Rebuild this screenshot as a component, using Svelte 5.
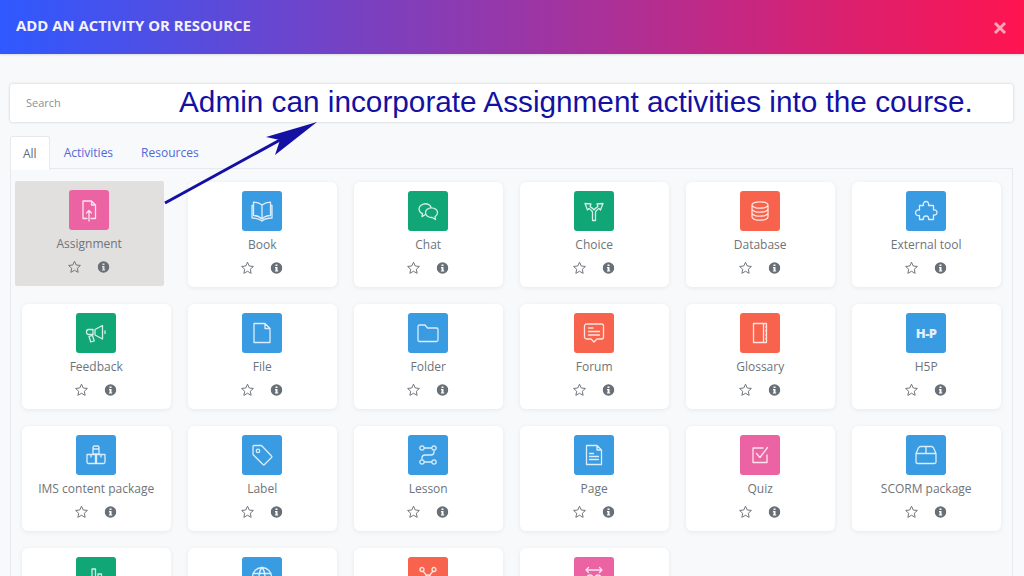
<script>
  const colors = { pink: '#ec63a4', blue: '#399be2', green: '#11a676', orange: '#f7634d' }

  const icons = {
    assign: 'M10 20.5H6V3H14.5L18.5 7V20.5H14M14.5 3V7H18.5M12 23V12.5M9.5 15L12 12.5L14.5 15',
    book: 'M12 6C9.5 4 6.5 3.2 3.5 3.2V16.5C6.5 16.5 9.5 17.5 12 20C14.5 17.5 17.5 16.5 20.5 16.5V3.2C17.5 3.2 14.5 4 12 6ZM12 6V20M3.5 6.5H2V19C6 19 9.5 19.8 12 22C14.5 19.8 18 19 22 19V6.5H20.5',
    chat: 'M6.5 14.8C3.5 13.4 2.2 10.6 3.6 7.8C5 5.1 9.2 3.9 12.4 5.4C13.8 6.1 14.8 7.2 15.2 8.6M6.5 14.5L6 17.6L9 15.8M15.5 8.8C19 8.8 21.5 11 21.5 13.7C21.5 15.5 20.5 16.8 19 17.6L19.5 20.5L16.2 18.5C12.5 18.7 9.5 16.5 9.5 13.7C9.5 11 12 8.8 15.5 8.8Z',
    choice: 'M10.5 21.5H13.5V13.5C13.5 12 15 11 17 9.5L18.5 11L21 4.5L15 5L16 7.5C14 9 12.5 10 12 11C11.5 10 10 9 8 7.5L9 5L3 4.5L5.5 11L7 9.5C9 11 10.5 12 10.5 13.5Z',
    database: 'M4 6C4 4.2 7.6 2.8 12 2.8S20 4.2 20 6V18C20 19.8 16.4 21.2 12 21.2S4 19.8 4 18ZM4 6C4 7.8 7.6 9.2 12 9.2S20 7.8 20 6M4 10C4 11.8 7.6 13.2 12 13.2S20 11.8 20 10M4 14C4 15.8 7.6 17.2 12 17.2S20 15.8 20 14',
    puzzle: 'M9.5 6.5C8.8 4 10.2 2.5 12 2.5S15.2 4 14.5 6.5H19.5V11C21.8 10.4 23 11.8 23 13.5S21.8 16.6 19.5 16V20.5H14.5C15.2 18.5 14 17 12 17S8.8 18.5 9.5 20.5H5.5V16.5C3 17 1.5 15.5 1.5 13.7S3 10.4 5.5 11V6.5Z',
    feedback: 'M11 8.5L18.5 4.5V18L11 14ZM21 10V12.5M4.5 8.5H9V13.5H4.5C3.2 13.5 2.5 12.5 2.5 11S3.2 8.5 4.5 8.5ZM5 15.5L8.5 14.5L10.2 20L6.8 21Z',
    file: 'M4 2.5H15L20 7.5V21.5H4ZM15 2.5V7.5H20',
    folder: 'M2 5.5C2 4.5 2.5 4 3.5 4H9L11.5 7H20.5C21.5 7 22 7.5 22 8.5V19C22 20 21.5 20.5 20.5 20.5H3.5C2.5 20.5 2 20 2 19Z',
    forum: 'M4.5 3H19.5A2 2 0 0 1 21.5 5V16A2 2 0 0 1 19.5 18H15L12 21L9 18H4.5A2 2 0 0 1 2.5 16V5A2 2 0 0 1 4.5 3ZM6.5 7H11M6.5 10.5H17.5M6.5 14H17.5',
    glossary: 'M5.5 2.5H18.5V21.5H5.5ZM15.5 2.5V21.5M18 5V6.5M18 9V10.5M18 13V14.5M18 17V18.5',
    ims: 'M9 8V4.5C9 3.5 9.5 3 10.5 3H13.5C14.5 3 15 3.5 15 4.5V11H9V8ZM9 6H15M3 11.5H11.5V20.5H4.5C3.5 20.5 3 20 3 19ZM12.5 11.5H21V19C21 20 20.5 20.5 19.5 20.5H12.5ZM7 11.5V14M17 11.5V14',
    label: 'M3 3.5C3 3 3.3 2.5 4 2.5H11.5L21.5 13C22 13.5 22 14 21.5 14.5L14.5 21.5C14 22 13.5 22 13 21.5L3 11.5ZM8 6.2A1.7 1.7 0 1 0 8 9.6A1.7 1.7 0 1 0 8 6.2Z',
    lesson: 'M6 2.8A2.2 2.2 0 1 0 6 7.2A2.2 2.2 0 1 0 6 2.8ZM18 2.8A2.2 2.2 0 1 0 18 7.2A2.2 2.2 0 1 0 18 2.8ZM6 16.8A2.2 2.2 0 1 0 6 21.2A2.2 2.2 0 1 0 6 16.8ZM18 16.8A2.2 2.2 0 1 0 18 21.2A2.2 2.2 0 1 0 18 16.8ZM8.2 5H15.8M8.2 19H15.8M18 7.2V9C18 11 16.5 12 15 12H9C7.5 12 6 13 6 15V16.8',
    page: 'M4.5 2.5H15L19.5 7V21.5H4.5ZM15 2.5V7H19.5M7.5 10.5H11.5M7.5 13.5H16.5M7.5 16.5H16.5',
    quiz: 'M19 12V19.5H5V5H15M8.5 10.5L12 14.5L19.5 4.5',
    scorm: 'M6.5 3.5H17.5C18.5 3.5 19 4 19.5 4.8L22 10.5V19C22 20 21.5 20.5 20.5 20.5H3.5C2.5 20.5 2 20 2 19V10.5L4.5 4.8C5 4 5.5 3.5 6.5 3.5ZM2 10.5H22M12 3.5V10.5',
    survey: 'M8 19V4H11.5V19ZM14 19V9H17.5V19ZM4 21H20',
    url: 'M12 2.5A9.5 9.5 0 1 0 12 21.5A9.5 9.5 0 1 0 12 2.5ZM12 2.5C8 7 8 17 12 21.5M12 2.5C16 7 16 17 12 21.5M3.5 8.5H20.5M3.5 15.5H20.5',
    wiki: 'M12 10A2.5 2.5 0 1 0 12 15A2.5 2.5 0 1 0 12 10ZM6 2.5A2 2 0 1 0 6 6.5A2 2 0 1 0 6 2.5ZM18 2.5A2 2 0 1 0 18 6.5A2 2 0 1 0 18 2.5ZM7 6L10.5 10.5M17 6L13.5 10.5M12 15V20',
    workshop: 'M4 5H20M4 5L6.5 2.5M4 5L6.5 7.5M20 5L17.5 2.5M20 5L17.5 7.5M8 10A3 3 0 1 0 8 16A3 3 0 1 0 8 10ZM16 10A3 3 0 1 0 16 16A3 3 0 1 0 16 10Z'
  }

  // the last row runs off the bottom of the window, only its tiles show
  const items = [
    { name: 'Assignment', color: 'pink', icon: 'assign', active: true },
    { name: 'Book', color: 'blue', icon: 'book' },
    { name: 'Chat', color: 'green', icon: 'chat' },
    { name: 'Choice', color: 'green', icon: 'choice' },
    { name: 'Database', color: 'orange', icon: 'database' },
    { name: 'External tool', color: 'blue', icon: 'puzzle' },
    { name: 'Feedback', color: 'green', icon: 'feedback' },
    { name: 'File', color: 'blue', icon: 'file' },
    { name: 'Folder', color: 'blue', icon: 'folder' },
    { name: 'Forum', color: 'orange', icon: 'forum' },
    { name: 'Glossary', color: 'orange', icon: 'glossary' },
    { name: 'H5P', color: 'blue', text: 'H-P' },
    { name: 'IMS content package', color: 'blue', icon: 'ims' },
    { name: 'Label', color: 'blue', icon: 'label' },
    { name: 'Lesson', color: 'blue', icon: 'lesson' },
    { name: 'Page', color: 'blue', icon: 'page' },
    { name: 'Quiz', color: 'pink', icon: 'quiz' },
    { name: 'SCORM package', color: 'blue', icon: 'scorm' },
    { color: 'green', icon: 'survey' },
    { color: 'blue', icon: 'url' },
    { color: 'orange', icon: 'wiki' },
    { color: 'pink', icon: 'workshop' }
  ]
</script>

<div class="modal">
  <header class="head">
    <h1>ADD AN ACTIVITY OR RESOURCE</h1>
    <svg class="close" viewBox="0 0 14 14" aria-hidden="true"><path d="M2 2L12 12M12 2L2 12" /></svg>
  </header>

  <main class="body">
    <div class="search">Search</div>

    <nav class="tabs">
      <span class="tab on">All</span>
      <span class="tab">Activities</span>
      <span class="tab">Resources</span>
    </nav>

    <section class="pane">
      {#each items as item}
        <article class="card" class:active={item.active}>
          <div class="tile" style="background:{colors[item.color]}">
            {#if item.text}
              <span class="logo">{item.text}</span>
            {:else}
              <svg viewBox="0 0 24 24" aria-hidden="true"><path d={icons[item.icon]} /></svg>
            {/if}
          </div>
          {#if item.name}
            <div class="name">{item.name}</div>
            <div class="actions">
              <svg class="star" viewBox="0 0 14 14" aria-hidden="true"><path d="M7 1.2L8.75 5L12.9 5.45L9.8 8.25L10.65 12.35L7 10.25L3.35 12.35L4.2 8.25L1.1 5.45L5.25 5Z" /></svg>
              <svg class="info" viewBox="0 0 12 12" aria-hidden="true"><path fill-rule="evenodd" d="M6 .2A5.8 5.8 0 1 0 6 11.8A5.8 5.8 0 1 0 6 .2ZM5 2.4H7V4.1H5ZM4.5 5H7V8.4H7.7V9.6H4.4V8.4H5.1V6.2H4.5Z" /></svg>
            </div>
          {/if}
        </article>
      {/each}
    </section>
  </main>

  <!-- annotation drawn over the screenshot -->
  <div class="note">Admin can incorporate Assignment activities into the course.</div>
  <svg class="arrow" viewBox="0 0 1024 576" aria-hidden="true">
    <path d="M165 203L280 140" />
    <polygon points="317,122 266,137 280,140 275,155" />
  </svg>
</div>

<style>
  :global(body) {
    margin: 0;
    overflow: hidden;
  }
  .modal {
    position: relative;
    width: 1024px;
    height: 576px;
    overflow: hidden;
    background: #f7f9fb;
    font-family: "Open Sans", "Noto Sans", sans-serif;
  }
  .head {
    display: flex;
    justify-content: space-between;
    height: 54px;
    padding: 0 17px 0 16px;
    box-sizing: border-box;
    background: linear-gradient(90deg, #2f59ff 0%, #ff1450 100%);
    box-shadow: 0 1px 2px rgba(0, 0, 0, .12);
  }
  .head h1 {
    margin: 15px 0 0;
    font-size: 14.9px;
    line-height: 20px;
    font-weight: 700;
    color: #f4f2fc;
  }
  .close {
    width: 14px;
    height: 14px;
    margin-top: 21px;
    fill: none;
    stroke: #ffa3b5;
    stroke-width: 3;
  }
  .body {
    padding: 30px 10px 0;
  }
  .search {
    height: 38px;
    width: 1003px;
    padding-left: 16px;
    box-sizing: border-box;
    background: #fff;
    border-radius: 3px;
    box-shadow: 0 0 3px rgba(0, 0, 0, .2);
    font-size: 11px;
    line-height: 38px;
    color: #8b9096;
  }
  .tabs {
    display: flex;
    margin-top: 14px;
    height: 32px;
  }
  .tab {
    padding: 0 14px;
    font-size: 12px;
    line-height: 34px;
    color: #5468d8;
  }
  .tab.on {
    padding: 0 12px;
    background: #fff;
    color: #666c72;
    border: 1px solid #e6e9ed;
    border-bottom: 0;
    border-radius: 3px 3px 0 0;
    height: 33px;
    position: relative;
    z-index: 1;
  }
  .pane {
    display: grid;
    grid-template-columns: repeat(6, 149px);
    grid-auto-rows: 104.9px;
    gap: 17px;
    width: 1003px;
    box-sizing: border-box;
    padding: 13px 0 0 10.7px;
    border: 1px solid #e6e9ed;
    border-bottom: 0;
  }
  .card {
    display: flex;
    flex-direction: column;
    align-items: center;
    padding-top: 9px;
    box-sizing: border-box;
    background: #fff;
    border-radius: 6px;
    box-shadow: 0 1px 5px rgba(0, 0, 0, .07);
  }
  .card.active {
    background: #e2dfdf;
    border-radius: 2px;
    box-shadow: none;
    transform: translate(-7px, -1px);
  }
  .tile {
    display: flex;
    align-items: center;
    justify-content: center;
    flex: none;
    width: 40px;
    height: 40px;
    border-radius: 3px;
  }
  .tile svg {
    width: 24px;
    height: 24px;
    fill: none;
    stroke: rgba(255, 255, 255, .82);
    stroke-width: 1.3;
    stroke-linejoin: round;
    stroke-linecap: round;
  }
  .logo {
    font-size: 13px;
    font-weight: 800;
    letter-spacing: -.5px;
    color: rgba(255, 255, 255, .85);
  }
  .name {
    margin-top: 5px;
    font-size: 12px;
    line-height: 18px;
    color: #6d747a;
    white-space: nowrap;
  }
  .actions {
    display: flex;
    align-items: center;
    gap: 16px;
    margin-top: 7px;
    transform: translateX(-.5px);
  }
  .star {
    width: 14px;
    height: 14px;
    fill: none;
    stroke: #70767c;
    stroke-width: 1;
  }
  .info {
    width: 12px;
    height: 12px;
    fill: #686f76;
  }
  .note {
    position: absolute;
    left: 179px;
    top: 85px;
    font-family: "Liberation Sans", Arial, sans-serif;
    font-size: 29.75px;
    line-height: 34px;
    color: #1410a4;
    white-space: nowrap;
  }
  .arrow {
    position: absolute;
    left: 0;
    top: 0;
    width: 1024px;
    height: 576px;
    pointer-events: none;
  }
  .arrow path {
    stroke: #1410a4;
    stroke-width: 3;
    fill: none;
  }
  .arrow polygon {
    fill: #1410a4;
  }
</style>
